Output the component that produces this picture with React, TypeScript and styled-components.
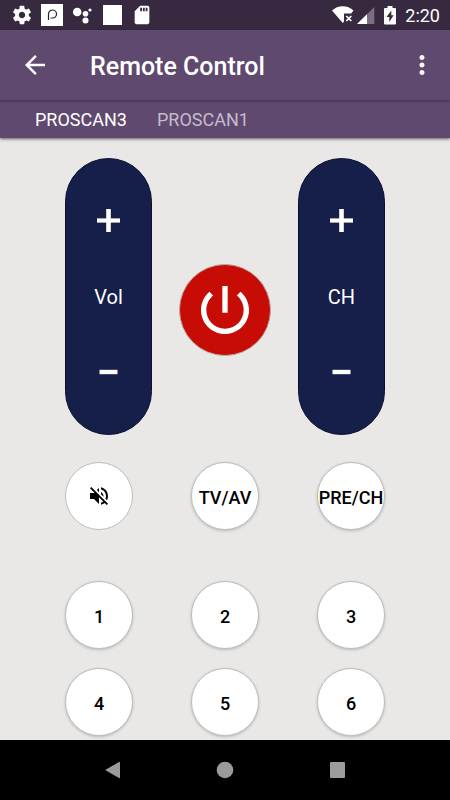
import React, { useState } from "react";
import styled, { createGlobalStyle } from "styled-components";

const GlobalStyle = createGlobalStyle`
  *, *::before, *::after { box-sizing: border-box; }
  body { margin: 0; background: #e9e8e6; font-family: Roboto, sans-serif; }
  button { font: inherit; color: inherit; background: none; border: 0; padding: 0; cursor: pointer; }
  svg { display: block; flex: none; }
`;

const Screen = styled.div`
  display: flex;
  flex-direction: column;
  height: 100vh;
`;

const StatusBar = styled.div`
  display: flex;
  flex: none;
  align-items: center;
  justify-content: space-between;
  height: 30px;
  padding: 0 10px 0 11px;
  background: #37293f;
  color: #fff;
`;

const IconGroup = styled.div<{ $gap: number }>`
  display: flex;
  align-items: center;
  gap: ${(p) => p.$gap}px;
`;

const Clock = styled.time`
  padding-top: 2px;
  font-size: 18px;
  line-height: 28px;
`;

const AppBar = styled.header`
  display: flex;
  flex: none;
  align-items: center;
  height: 70px;
  padding: 0 8px 0 15px;
  background: #60496f;
  color: #fff;
  z-index: 2;
  box-shadow: 0 1px 3px rgba(0, 0, 0, 0.35);
`;

const BarButton = styled.button`
  display: flex;
  align-items: center;
  justify-content: center;
  width: 40px;
  height: 40px;
`;

const Title = styled.h1`
  flex: 1;
  margin: 0;
  padding: 4px 0 0 35px;
  font-size: 25px;
  font-weight: 500;
  line-height: 30px;
`;

const TabBar = styled.div`
  display: flex;
  flex: none;
  height: 38px;
  padding: 0 20px;
  background: #60496f;
  z-index: 1;
  box-shadow: 0 1px 3px rgba(0, 0, 0, 0.6);
`;

const Tab = styled.button<{ $active: boolean }>`
  padding: 2px 15px 0;
  font-size: 18px;
  line-height: 36px;
  color: ${(p) => (p.$active ? "#fff" : "#c6bbcd")};
`;

const Pad = styled.main`
  display: flex;
  flex: 1;
  flex-direction: column;
  min-height: 0;
  overflow: hidden;
  padding: 20px 65px 0;
  background: #e9e8e6;
`;

const Rockers = styled.div`
  display: flex;
  align-items: flex-start;
  justify-content: space-between;
  margin-bottom: 27px;
`;

const Rocker = styled.div`
  display: flex;
  flex-direction: column;
  align-items: center;
  justify-content: space-between;
  width: 87px;
  height: 277px;
  padding: 49px 0;
  border: 1px solid #0b1031;
  border-radius: 44px;
  background: #161e4a;
  color: #fff;
`;

const RockerLabel = styled.span`
  font-size: 20px;
  line-height: 26px;
`;

const Power = styled.button`
  display: flex;
  align-items: center;
  justify-content: center;
  width: 92px;
  height: 92px;
  margin-top: 106px;
  border: 1px solid #b9a9a7;
  border-radius: 50%;
  background: #c60c04;
  color: #fff;
`;

const KeyRow = styled.div<{ $after: number }>`
  display: flex;
  justify-content: space-between;
  margin-bottom: ${(p) => p.$after}px;
`;

const Key = styled.button<{ $flat?: boolean }>`
  display: flex;
  flex: none;
  align-items: center;
  justify-content: center;
  width: 68px;
  height: 68px;
  padding-top: ${(p) => (p.$flat ? 0 : 2)}px;
  border: 1px solid #bdbdbd;
  border-radius: 50%;
  background: #fff;
  color: #000;
  font-size: 18px;
  font-weight: 500;
  white-space: nowrap;
  box-shadow: ${(p) => (p.$flat ? "none" : "0 1px 3px rgba(0, 0, 0, 0.2)")};
`;

const NavBar = styled.nav`
  display: flex;
  flex: none;
  align-items: center;
  justify-content: space-around;
  height: 60px;
  padding: 0 12.5%;
  background: #000;
  color: #9b9b9b;
`;

const NavButton = styled.button`
  display: flex;
  align-items: center;
  justify-content: center;
  width: 40px;
  height: 48px;
`;

const Material = ({ d, size }: { d: string; size: number }) => (
  <svg width={size} height={size} viewBox="0 0 24 24" fill="currentColor" aria-hidden="true">
    <path d={d} />
  </svg>
);

const GEAR =
  "M19.43 12.98c.04-.32.07-.64.07-.98s-.03-.66-.07-.98l2.11-1.65c.19-.15.24-.42.12-.64l-2-3.46c-.12-.22-.39-.3-.61-.22l-2.49 1c-.52-.4-1.08-.73-1.69-.98l-.38-2.65C14.46 2.18 14.25 2 14 2h-4c-.25 0-.46.18-.49.42l-.38 2.65c-.61.25-1.17.59-1.69.98l-2.49-1c-.23-.09-.49 0-.61.22l-2 3.46c-.13.22-.07.49.12.64l2.11 1.65c-.04.32-.07.65-.07.98s.03.66.07.98l-2.11 1.65c-.19.15-.24.42-.12.64l2 3.46c.12.22.39.3.61.22l2.49-1c.52.4 1.08.73 1.69.98l.38 2.65c.03.24.24.42.49.42h4c.25 0 .46-.18.49-.42l.38-2.65c.61-.25 1.17-.59 1.69-.98l2.49 1c.23.09.49 0 .61-.22l2-3.46c.12-.22.07-.49-.12-.64l-2.11-1.65zM12 15.5c-1.93 0-3.5-1.57-3.5-3.5s1.57-3.5 3.5-3.5 3.5 1.57 3.5 3.5-1.57 3.5-3.5 3.5z";
const SD_CARD =
  "M18 2h-8L4.02 8 4 20c0 1.1.9 2 2 2h12c1.1 0 2-.9 2-2V4c0-1.1-.9-2-2-2zm-6 6h-2V4h2v4zm3 0h-2V4h2v4zm3 0h-2V4h2v4z";
const BACK = "M20 11H7.83l5.59-5.59L12 4l-8 8 8 8 1.41-1.41L7.83 13H20v-2z";
const MORE =
  "M12 8c1.1 0 2-.9 2-2s-.9-2-2-2-2 .9-2 2 .9 2 2 2zm0 2c-1.1 0-2 .9-2 2s.9 2 2 2 2-.9 2-2-.9-2-2-2zm0 6c-1.1 0-2 .9-2 2s.9 2 2 2 2-.9 2-2-.9-2-2-2z";
const POWER =
  "M13 3h-2v10h2V3zm4.83 2.17l-1.42 1.42C17.99 7.86 19 9.81 19 12c0 3.87-3.13 7-7 7s-7-3.13-7-7c0-2.19 1.01-4.14 2.58-5.42L6.17 5.17C4.23 6.82 3 9.26 3 12c0 4.97 4.03 9 9 9s9-4.03 9-9c0-2.74-1.23-5.18-3.17-6.83z";
const MUTE =
  "M16.5 12c0-1.77-1.02-3.29-2.5-4.03v2.21l2.45 2.45c.03-.2.05-.41.05-.63zm2.5 0c0 .94-.2 1.82-.54 2.64l1.51 1.51C20.63 14.91 21 13.5 21 12c0-4.28-2.99-7.86-7-8.77v2.06c2.89.86 5 3.54 5 6.71zM4.27 3L3 4.27 7.73 9H3v6h4l5 5v-6.73l4.25 4.25c-.67.52-1.42.93-2.25 1.18v2.06c1.38-.31 2.63-.95 3.69-1.81L19.73 21 21 19.73l-9-9L4.27 3zM12 4L9.91 6.09 12 8.18V4z";

const AppBadge = () => (
  <svg width="22" height="22" viewBox="0 0 22 22" aria-hidden="true">
    <rect width="22" height="22" fill="#fff" />
    <path d="M7.500 16V10a4 4 0 1 1 4 4h-2" fill="none" stroke="#222" strokeWidth="1.200" />
  </svg>
);

const AssistantIcon = () => (
  <svg width="22" height="22" viewBox="0 0 22 22" fill="currentColor" aria-hidden="true">
    <circle cx="6.200" cy="8" r="4.300" />
    <circle cx="14.500" cy="9.800" r="2.800" />
    <circle cx="14.500" cy="16.400" r="3" />
    <circle cx="19" cy="6" r="1.600" />
  </svg>
);

const BlankBadge = () => (
  <svg width="22" height="22" viewBox="0 0 22 22" aria-hidden="true">
    <rect x="2" y="1" width="19" height="20" fill="#fff" />
  </svg>
);

const WifiIcon = () => (
  <svg width="24" height="20" viewBox="0 0 24 20" aria-hidden="true">
    <path
      d="M1 5.500C4 2.800 7.700 1.300 11.800 1.300S19.600 2.800 22.500 5.500L20.200 8.500H13V16.500L11.800 18Z"
      fill="#fff"
    />
    <path d="M15.300 11L20.300 16M20.300 11L15.300 16" stroke="#fff" strokeWidth="1.700" />
  </svg>
);

const SignalIcon = () => (
  <svg width="18" height="20" viewBox="0 0 18 20" aria-hidden="true">
    <path d="M0 19L17.300 2V19Z" fill="#7a6f82" />
    <path d="M0 19L10 9.200V19Z" fill="#fff" />
  </svg>
);

const BatteryIcon = () => (
  <svg width="12" height="20" viewBox="0 0 12 20" aria-hidden="true">
    <path d="M3.500 1H8.500V3H11Q12 3 12 4V18.500Q12 19.500 11 19.500H1Q0 19.500 0 18.500V4Q0 3 1 3H3.500Z" fill="#fff" />
    <path d="M7.300 5.500L2.500 12H5.300V17L9.600 10.300H7.300Z" fill="#37293f" />
  </svg>
);

const Plus = () => (
  <svg width="25" height="25" viewBox="0 0 25 25" aria-hidden="true">
    <path d="M1 12.500H24" stroke="#fff" strokeWidth="4.200" />
    <path d="M12.500 1V24" stroke="#fff" strokeWidth="4.600" />
  </svg>
);

const Minus = () => (
  <svg width="25" height="25" viewBox="0 0 25 25" aria-hidden="true">
    <path d="M3.500 12H21.500" stroke="#fff" strokeWidth="4.400" />
  </svg>
);

const RockerControl = ({ label, name }: { label: string; name: string }) => (
  <Rocker role="group" aria-label={name}>
    <button type="button" aria-label={`${name} up`}>
      <Plus />
    </button>
    <RockerLabel>{label}</RockerLabel>
    <button type="button" aria-label={`${name} down`}>
      <Minus />
    </button>
  </Rocker>
);

const remotes = ["PROSCAN3", "PROSCAN1"];
const digitRows = [
  ["1", "2", "3"],
  ["4", "5", "6"],
];

export default function App() {
  const [active, setActive] = useState(remotes[0]);

  return (
    <>
      <GlobalStyle />
      <Screen>
        <StatusBar>
          <IconGroup $gap={8}>
            <Material d={GEAR} size={22} />
            <AppBadge />
            <AssistantIcon />
            <BlankBadge />
            <Material d={SD_CARD} size={22} />
          </IconGroup>
          <IconGroup $gap={9}>
            <IconGroup $gap={2}>
              <WifiIcon />
              <SignalIcon />
            </IconGroup>
            <BatteryIcon />
            <Clock>2:20</Clock>
          </IconGroup>
        </StatusBar>

        <AppBar>
          <BarButton type="button" aria-label="Back">
            <Material d={BACK} size={30} />
          </BarButton>
          <Title>Remote Control</Title>
          <BarButton type="button" aria-label="More options">
            <Material d={MORE} size={30} />
          </BarButton>
        </AppBar>

        <TabBar role="tablist">
          {remotes.map((name) => (
            <Tab
              key={name}
              type="button"
              role="tab"
              aria-selected={name === active}
              $active={name === active}
              onClick={() => setActive(name)}
            >
              {name}
            </Tab>
          ))}
        </TabBar>

        <Pad>
          <Rockers>
            <RockerControl label="Vol" name="Volume" />
            <Power type="button" aria-label="Power">
              <Material d={POWER} size={64} />
            </Power>
            <RockerControl label="CH" name="Channel" />
          </Rockers>
          <KeyRow $after={51}>
            <Key type="button" $flat aria-label="Mute">
              <Material d={MUTE} size={24} />
            </Key>
            <Key type="button">TV/AV</Key>
            <Key type="button">PRE/CH</Key>
          </KeyRow>
          {digitRows.map((row) => (
            <KeyRow key={row[0]} $after={19}>
              {row.map((digit) => (
                <Key key={digit} type="button">
                  {digit}
                </Key>
              ))}
            </KeyRow>
          ))}
        </Pad>

        <NavBar>
          <NavButton type="button" aria-label="Back">
            <svg width="16" height="18" viewBox="0 0 16 18" fill="currentColor" aria-hidden="true">
              <path d="M15 1.500V16.500Q15 17.500 14 17L1 9.600Q0 9 1 8.400L14 1Q15 0.500 15 1.500Z" />
            </svg>
          </NavButton>
          <NavButton type="button" aria-label="Home">
            <svg width="18" height="18" viewBox="0 0 18 18" fill="currentColor" aria-hidden="true">
              <circle cx="9" cy="9" r="8.300" />
            </svg>
          </NavButton>
          <NavButton type="button" aria-label="Recent apps">
            <svg width="16" height="16" viewBox="0 0 16 16" fill="currentColor" aria-hidden="true">
              <rect width="15" height="16" rx="1" />
            </svg>
          </NavButton>
        </NavBar>
      </Screen>
    </>
  );
}
